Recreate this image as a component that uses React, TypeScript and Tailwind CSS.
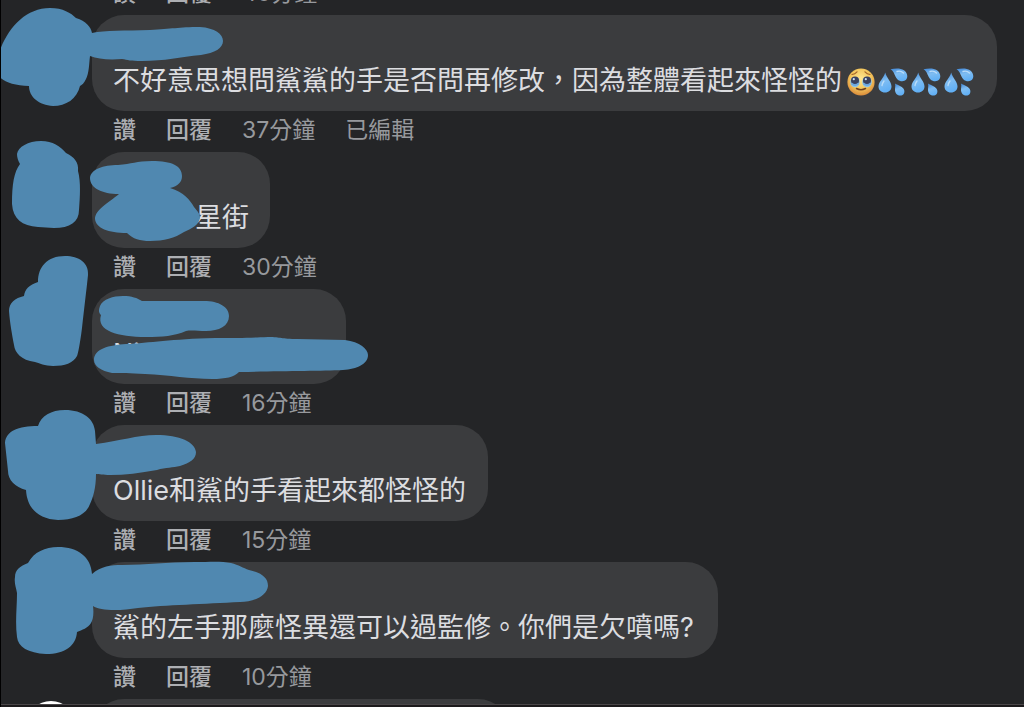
type Comment = {
  id: number
  text: string
  time: string
  edited?: boolean
  bubble: string
  emojis?: boolean
  scribbles: string[]
}

// scribble paths use the top left corner of their comment row as origin
const comments: Comment[] = [
  {
    id: 1,
    text: '不好意思想問鯊鯊的手是否問再修改，因為整體看起來怪怪的',
    time: '37分鐘',
    edited: true,
    emojis: true,
    bubble: 'w-[905px] h-24',
    scribbles: [
      'M-1 38C7 14 25 -7 50 -7C63 -7 71 -2 76 3C86 6 91 12 92 18C105 15 125 16 150 15C172 14 178 12 200 12C215 13 223 19 223 26C223 33 215 38 201 40C180 42 165 46 142 46C130 46 128 45 122 44C108 45 98 44 90 41C89 50 89 58 86 64C84 68 82 70 80 71C77 84 66 91 53 91C39 90 29 82 29 71C14 71 2 66 -1 61Z',
    ],
  },
  {
    id: 2,
    text: '星街',
    time: '30分鐘',
    bubble: 'w-[178px] h-24 justify-end',
    scribbles: [
      'M17 2C18 -5 28 -11 41 -11C53 -11 60 -6 66 1C74 5 79 10 78 19C81 30 80 45 79 58C79 70 70 76 54 76C48 76 44 75 38 75C22 74 13 67 12 52C12 32 14 20 20 12C18 9 17 5 17 2Z',
      'M90 26C91 17 103 13 118 13C132 12 136 9 152 9C172 9 182 14 182 24C182 30 178 34 170 36C184 40 190 48 194 55C198 60 200 62 200 66C199 73 191 77 184 80C175 86 164 89 150 89C140 89 133 87 127 81C108 81 96 76 95 67C95 58 108 51 119 42C102 42 90 36 90 26Z',
    ],
  },
  {
    id: 3,
    text: 'Ni',
    time: '16分鐘',
    bubble: 'w-[254px] h-[95px]',
    scribbles: [
      'M38 -7C38 -22 47 -33 65 -33C79 -33 89 -26 88 -14C86 5 84 20 82 39C80 55 78 65 77 67C73 74 65 77 53 77C45 77 39 74 35 73C21 71 15 64 14 56C12 45 10 35 9 22C9 14 15 9 24 7C25 0 29 -4 38 -7Z',
      'M101 26C98 23 99 20 100 17C103 10 113 7 123 7C132 7 137 9 142 12H204C219 12 229 18 229 27C229 37 219 42 206 42C198 42 191 41 186 42C175 47 162 48 146 48C118 48 96 42 101 26Z',
      'M94 71C94 60 109 56 126 55C150 54 171 50 215 49C240 49 245 49 268 48C282 48 280 50 298 50L345 51C360 53 368 60 368 66C368 75 357 80 343 81C320 82 280 82 239 83C234 88 226 90 212 90C190 90 170 86 145 85C130 84 120 84 112 84C101 82 94 77 94 71Z',
    ],
  },
  {
    id: 4,
    text: 'Ollie和鯊的手看起來都怪怪的',
    time: '15分鐘',
    bubble: 'w-[396px] h-24',
    scribbles: [
      'M38 1C41 -9 51 -15 65 -15C83 -15 94 -6 95 6L96 19C120 16 137 10 156 10C180 10 195 17 196 27C196 34 190 38 180 41C173 43 166 42 157 45C140 48 125 50 110 50C103 50 99 49 96 49C96 63 93 73 90 79C86 90 74 95 58 95C38 94 27 83 26 65C15 62 8 55 8 46L5 18C6 6 18 1 38 1Z',
    ],
  },
  {
    id: 5,
    text: '鯊的左手那麼怪異還可以過監修。你們是欠噴嗎?',
    time: '10分鐘',
    bubble: 'w-[626px] h-24',
    scribbles: [
      'M28 1C34 -10 45 -15 58 -15C78 -15 91 -5 92 12C101 4 111 3 122 3C148 3 165 0 195 0C210 0 221 -1 231 1C239 3 243 6 249 8C262 11 268 16 268 24C267 34 254 40 240 40C205 42 165 43 138 46C120 49 100 49 93 44C94 52 93 58 91 61C88 66 82 68 77 70C76 84 65 92 46 92C28 91 18 85 17 75C15 60 17 45 17 31C16 25 14 21 15 15C15 8 20 4 28 1Z',
    ],
  },
]

function PleadingFace() {
  return (
    <svg viewBox="0 0 28 28" className="h-7 w-7" role="img" aria-label="🥹">
      <defs>
        <radialGradient id="face" cx="50%" cy="38%" r="62%">
          <stop offset="0" stopColor="#ffe794" />
          <stop offset=".6" stopColor="#f3c65c" />
          <stop offset="1" stopColor="#d98a3a" />
        </radialGradient>
      </defs>
      <circle cx="14" cy="14" r="13.6" fill="url(#face)" />
      <ellipse cx="8" cy="14" rx="4.8" ry="5.2" fill="#8ec3e6" />
      <ellipse cx="20" cy="14" rx="4.8" ry="5.2" fill="#8ec3e6" />
      <circle cx="8" cy="12.6" r="4" fill="#3a415f" />
      <circle cx="20" cy="12.6" r="4" fill="#3a415f" />
      <circle cx="6.8" cy="11.2" r="1.1" fill="#cfe0f2" />
      <circle cx="18.8" cy="11.2" r="1.1" fill="#cfe0f2" />
      <path d="M4.5 15.5Q8 18.5 11.5 15.5M16.5 15.5Q20 18.5 23.5 15.5" fill="none" stroke="#6ba6df" strokeWidth="1.8" />
      <path d="M5 6.5Q8 6 10 3.8M23 6.5Q20 6 18 3.8" fill="none" stroke="#a5652a" strokeWidth="1.2" strokeLinecap="round" />
      <path d="M9.5 20.5Q14 23 18.5 20.5" fill="none" stroke="#70401f" strokeWidth="1.5" strokeLinecap="round" />
    </svg>
  )
}

function SweatDrops() {
  return (
    <svg viewBox="0 0 30 28" className="h-7 w-[30px]" role="img" aria-label="💦">
      <defs>
        <linearGradient id="drop" x1="0" y1="0" x2=".3" y2="1">
          <stop offset="0" stopColor="#3f86d6" />
          <stop offset=".5" stopColor="#7fbdf2" />
          <stop offset="1" stopColor="#62b0f5" />
        </linearGradient>
      </defs>
      <path d="M7.2 4.5C8.5 10 13.5 13.5 13.5 18.5C13.5 22 10.7 24.5 7 24.5C3.3 24.5 .5 22 .5 18.5C.5 13.5 6 10 7.2 4.5Z" fill="url(#drop)" />
      <path d="M12.5 1.3C17 .3 22.5 -.1 26 2.3C29.3 4.7 30.3 9 28.2 11.5C26 14 22 13.7 19.3 11.2C16.5 8.5 16.8 3.8 12.5 1.3Z" fill="url(#drop)" />
      <path d="M17 15.5C20 17.3 25.5 18.5 26.3 22.5C26.8 25.5 25 27.6 22.3 27.6C19.5 27.6 17.3 25.5 17 22.5C16.8 20 17.8 18 17 15.5Z" fill="url(#drop)" />
      <path d="M4 17.5Q4.5 15 6 13M19 3.5Q23 2.5 25.5 5" fill="none" stroke="#b9dcf9" strokeWidth="1.3" strokeLinecap="round" />
    </svg>
  )
}

function Meta({ time, edited }: { time: string; edited?: boolean }) {
  return (
    <div className="ml-[113px] flex items-center gap-[30px] pb-[3px] text-[23px] leading-[38px] text-[#97999d]">
      <button type="button" className="font-medium text-[#adafb3]">讚</button>
      <button type="button" className="font-medium text-[#adafb3]">回覆</button>
      <span>{time}</span>
      {edited && <span>已編輯</span>}
    </div>
  )
}

function CommentRow({ comment }: { comment: Comment }) {
  return (
    <li className="relative">
      <div className={`ml-[92px] flex items-end rounded-[32px] bg-[#3b3c3e] px-[21px] pb-3 ${comment.bubble}`}>
        <p className="flex items-center whitespace-nowrap text-[27px] leading-[36px] text-[#dcdde0]">
          {comment.text}
          {comment.emojis && (
            <span className="ml-[5px] mt-0.5 flex items-center gap-[3px]">
              <PleadingFace />
              <SweatDrops />
              <SweatDrops />
              <SweatDrops />
            </span>
          )}
        </p>
      </div>
      <Meta time={comment.time} edited={comment.edited} />
      <svg className="pointer-events-none absolute left-0 top-0 h-px w-px overflow-visible" fill="#5088b0" aria-hidden="true">
        {comment.scribbles.map(d => (
          <path key={d} d={d} />
        ))}
      </svg>
    </li>
  )
}

export default function App() {
  return (
    <main className="relative h-screen overflow-hidden border-l border-black bg-[#242527] font-['Inter','Noto_Sans_CJK_TC',sans-serif]">
      <div className="-ml-px -mt-[26px]">
        <Meta time="40分鐘" />
        <ul>
          {comments.map(comment => (
            <CommentRow key={comment.id} comment={comment} />
          ))}
        </ul>
        <div className="flex items-start">
          <div className="ml-[27px] mt-0.5 h-12 w-12 shrink-0 rounded-full bg-white" />
          <div className="ml-[17px] h-24 w-[418px] rounded-[32px] bg-[#3b3c3e]" />
        </div>
      </div>
      <div className="absolute inset-x-0 bottom-0 h-[3px] border-t border-[#4a4648] bg-[#1c1a1c]" />
    </main>
  )
}
